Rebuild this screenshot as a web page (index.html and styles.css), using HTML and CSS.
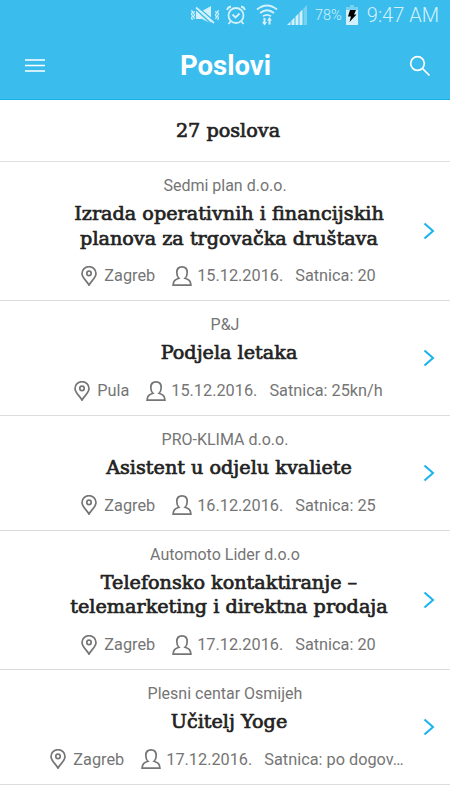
FILE: index.html
```
<!DOCTYPE html>
<html lang="hr">
<head>
  <meta charset="UTF-8">
  <meta name="viewport" content="width=device-width, initial-scale=1.0">
  <title>Poslovi</title>
  <link rel="stylesheet" href="styles.css">
</head>
<body>
  <!-- shared icons -->
  <svg class="sprite">
    <symbol id="pin" viewBox="0 0 16 20">
      <path d="M8 19.200C6.500 15.500 1 12 1 7.400A7 6.700 0 0 1 15 7.400C15 12 9.500 15.500 8 19.200Z"/>
      <circle cx="8" cy="7.400" r="2.200"/>
    </symbol>
    <symbol id="person" viewBox="0 0 20 20">
      <path d="M7 12.300C5.500 11 4.800 9 4.800 6.500C4.800 3 7 .9 10 .9s5.200 2.100 5.200 5.600C15.200 9 14.500 11 13 12.300C17.200 13.600 18.600 14.800 18.900 19.100H1.100C1.400 14.800 2.800 13.600 7 12.300Z"/>
    </symbol>
    <symbol id="chevron" viewBox="0 0 12 18">
      <path d="M1.500 1.500L10 9L1.500 16.500"/>
    </symbol>
  </svg>

  <header>
    <div class="status">
      <svg class="mute" width="30" height="20" viewBox="0 0 30 20">
        <path class="fill" d="M6 6h6l9-5v17.500L12 14H6z"/>
        <path class="cut" d="M5 3.500L22 19.500M7.500 1.500L25 17"/>
        <path class="slash" d="M6 2.500L24 18"/>
        <path class="line" d="M1.500 5l1 2-1 2 1 2-1 2 1 2M4.500 6l-1 2 1 2-1 2 1 2M25.500 6l1 2-1 2 1 2-1 2M28.500 5l-1 2 1 2-1 2 1 2-1 2"/>
      </svg>
      <svg class="alarm" width="20" height="20" viewBox="0 0 20 20">
        <circle class="line2" cx="10" cy="10.500" r="7.500"/>
        <path class="line2" d="M6.500 9.500l3 3 4-4M4.500 16.500L2.500 19M15.500 16.500l2 2.500M1 5q1-3 4-3.500M19 5q-1-3-4-3.500"/>
      </svg>
      <svg class="wifi" width="22" height="22" viewBox="0 0 22 22">
        <path class="line2" d="M1 5.500q10-8 20 0M4 9q7-5.500 14 0M7 12.300q4-3 8 0"/>
        <path class="fill" d="M7.500 14h2v4H11l-2.500 3.500L6 18h1.500zM12.500 20.500h2v-4H16L13.500 13 11 16.500h1.500z"/>
      </svg>
      <svg class="signal" width="20" height="20" viewBox="0 0 20 20">
        <path class="fill dim" d="M16.500 3.500L20 0v20h-3.500z"/>
        <path class="fill" d="M0 20l3.500-3.500V20zM4.500 20v-4.500l3-3V20zM8.500 20v-8.500l3-3V20zM12.500 20V7.500l3-3V20z"/>
      </svg>
      <span class="percent">78%</span>
      <svg class="battery" width="12" height="20" viewBox="0 0 12 20">
        <path class="fill dim" d="M4 0h4v2h4v4H0V2h4z"/>
        <path class="fill" d="M0 5h12v15H0z"/>
        <path class="bolt" d="M4 5h6L8 9.500h2.500L3.500 17l1.500-5.500H2z"/>
      </svg>
      <span class="time">9:47 AM</span>
    </div>
    <div class="bar">
      <svg class="menu" width="20" height="16" viewBox="0 0 20 16">
        <path d="M0 2h20M0 7.500h20M0 13h20"/>
      </svg>
      <h1>Poslovi</h1>
      <svg class="search" width="22" height="22" viewBox="0 0 22 22">
        <circle cx="8.500" cy="8.500" r="6.800"/>
        <path d="M13.500 13.500L20.500 20.500"/>
      </svg>
    </div>
  </header>

  <main>
    <h2 class="count">27 poslova</h2>

    <article class="job">
      <p class="company">Sedmi plan d.o.o.</p>
      <h3>Izrada operativnih i financijskih<br>planova za trgovačka društava</h3>
      <div class="meta">
        <svg class="pin"><use href="#pin"/></svg><span class="city">Zagreb</span>
        <svg class="person"><use href="#person"/></svg><span class="date">15.12.2016.</span>
        <span>Satnica: 20</span>
      </div>
      <svg class="chevron"><use href="#chevron"/></svg>
    </article>

    <article class="job">
      <p class="company">P&amp;J</p>
      <h3>Podjela letaka</h3>
      <div class="meta">
        <svg class="pin"><use href="#pin"/></svg><span class="city">Pula</span>
        <svg class="person"><use href="#person"/></svg><span class="date">15.12.2016.</span>
        <span>Satnica: 25kn/h</span>
      </div>
      <svg class="chevron"><use href="#chevron"/></svg>
    </article>

    <article class="job">
      <p class="company">PRO-KLIMA d.o.o.</p>
      <h3>Asistent u odjelu kvaliete</h3>
      <div class="meta">
        <svg class="pin"><use href="#pin"/></svg><span class="city">Zagreb</span>
        <svg class="person"><use href="#person"/></svg><span class="date">16.12.2016.</span>
        <span>Satnica: 25</span>
      </div>
      <svg class="chevron"><use href="#chevron"/></svg>
    </article>

    <article class="job">
      <p class="company">Automoto Lider d.o.o</p>
      <h3>Telefonsko kontaktiranje –<br>telemarketing i direktna prodaja</h3>
      <div class="meta">
        <svg class="pin"><use href="#pin"/></svg><span class="city">Zagreb</span>
        <svg class="person"><use href="#person"/></svg><span class="date">17.12.2016.</span>
        <span>Satnica: 20</span>
      </div>
      <svg class="chevron"><use href="#chevron"/></svg>
    </article>

    <article class="job last">
      <p class="company">Plesni centar Osmijeh</p>
      <h3>Učitelj Yoge</h3>
      <div class="meta">
        <svg class="pin"><use href="#pin"/></svg><span class="city">Zagreb</span>
        <svg class="person"><use href="#person"/></svg><span class="date">17.12.2016.</span>
        <span>Satnica: po dogov…</span>
      </div>
      <svg class="chevron"><use href="#chevron"/></svg>
    </article>
  </main>
</body>
</html>
```
FILE: styles.css
```
* {
  box-sizing: border-box;
}

body {
  margin: 0;
  height: 800px;
  overflow: hidden;
  background: #fff;
  color: #757575;
  font-family: Roboto, sans-serif;
  font-size: 16px;
}

h1, h2, h3, p {
  margin: 0;
}

svg {
  display: block;
  flex: none;
  fill: none;
}

.sprite {
  position: absolute;
  width: 0;
  height: 0;
}

/* header */
header {
  height: 100px;
  background: #3abced;
  border-bottom: 1px solid #18b1e4;
  color: #fff;
}

.status {
  display: flex;
  align-items: center;
  justify-content: flex-end;
  height: 30px;
  padding-right: 11px;
  color: #d3f1fc;
}

.status .fill {
  fill: #d3f1fc;
}

.status .dim {
  opacity: 0.4;
}

.status .line {
  stroke: #d3f1fc;
  stroke-width: 1.2;
}

.status .line2,
.status .slash {
  stroke: #d3f1fc;
  stroke-width: 1.8;
}

.status .cut {
  stroke: #3abced;
  stroke-width: 1.5;
}

.status .bolt {
  fill: #000;
}

.mute {
  margin-right: 1px;
}

.alarm {
  margin-left: 5px;
}

.wifi {
  margin-left: 10px;
}

.signal {
  margin-left: 9px;
}

.percent {
  margin-left: 8px;
  font-size: 14.5px;
  font-weight: 300;
}

.battery {
  margin-left: 4px;
}

.time {
  margin-left: 9px;
  font-size: 20px;
  font-weight: 300;
}

.bar {
  display: flex;
  align-items: center;
  justify-content: space-between;
  height: 70px;
  padding: 2px 19px 0 25px;
}

.bar svg {
  stroke: #fff;
  stroke-width: 1.7;
}

.bar h1 {
  padding: 0 3px 0 0;
  font-size: 27.5px;
  line-height: 32px;
  font-weight: 700;
}

/* job list */
.count,
.job h3 {
  color: #222;
  font-family: "DejaVu Serif", serif;
  font-size: 19.2px;
  font-weight: 400;
  -webkit-text-stroke: 0.7px #222;
}

.count {
  height: 62px;
  padding-left: 6px;
  border-bottom: 1px solid #e0e0e0;
  line-height: 61px;
  text-align: center;
}

.job {
  position: relative;
  padding: 12px 0 13.5px;
  border-bottom: 1px solid #dcdcdc;
  text-align: center;
}

.company {
  line-height: 23px;
}

.job h3 {
  margin-top: 5px;
  padding-left: 8px;
  line-height: 24.5px;
}

.meta {
  display: flex;
  align-items: center;
  justify-content: center;
  height: 22px;
  margin-top: 13.8px;
  padding-left: 7px;
  font-size: 16.3px;
  white-space: nowrap;
}

.last .meta {
  padding-left: 4px;
}

.pin,
.person {
  width: 16px;
  height: 20px;
  stroke: #757575;
  stroke-width: 1.7;
}

.person {
  width: 20px;
}

.city {
  margin: 0 17px 0 7px;
}

.date {
  margin: 0 12px 0 5px;
}

.chevron {
  position: absolute;
  top: 50%;
  right: 15px;
  width: 12px;
  height: 18px;
  margin-top: -9px;
  stroke: #17b3ee;
  stroke-width: 2;
}
```
